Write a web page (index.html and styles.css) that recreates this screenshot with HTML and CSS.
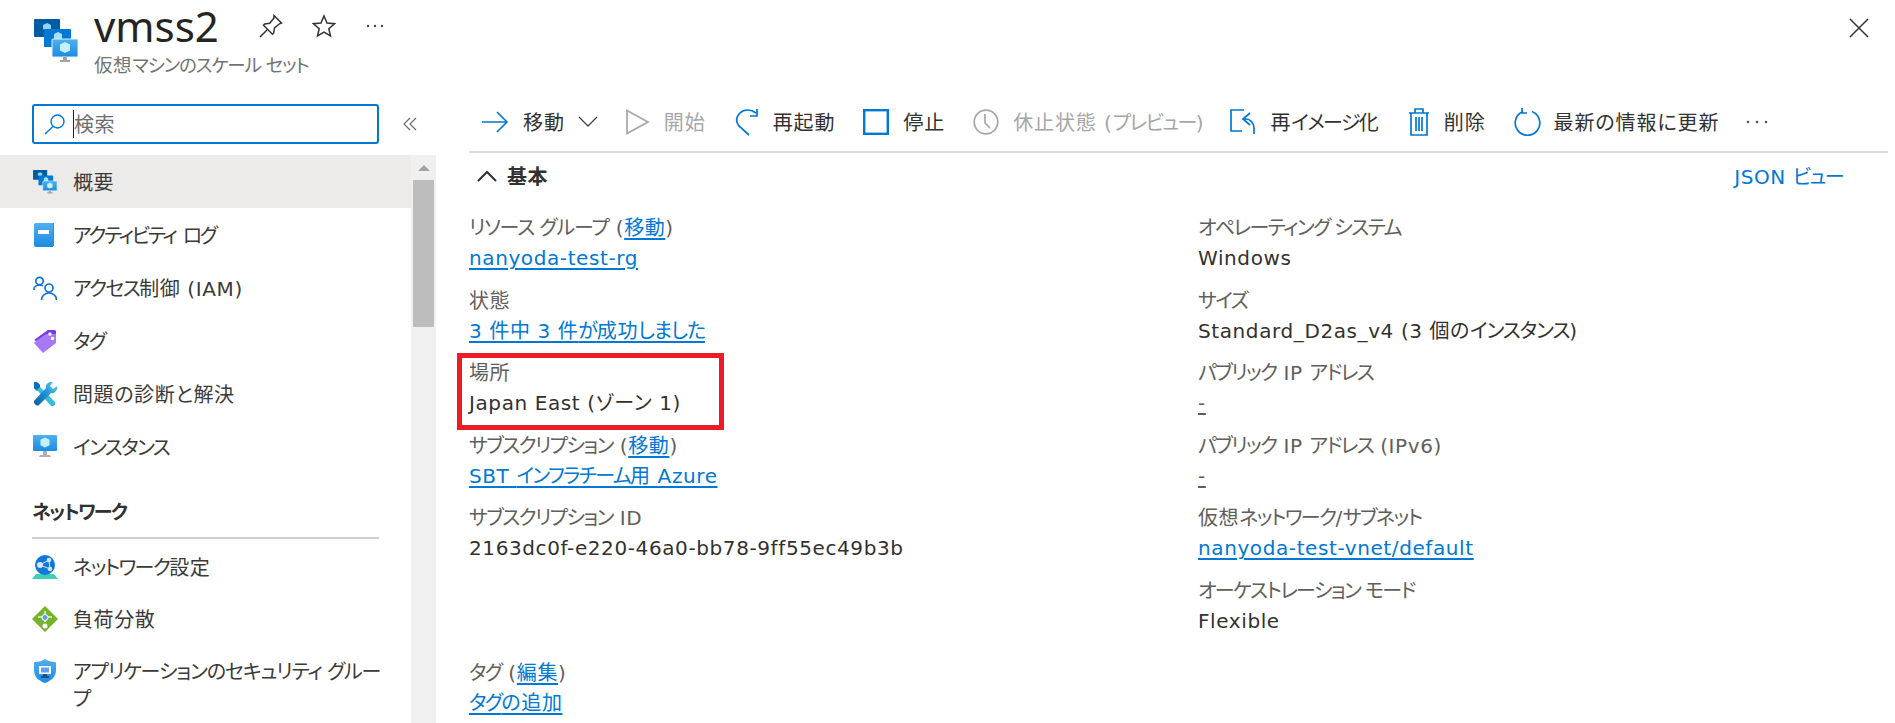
FILE: index.html
```html
<!DOCTYPE html>
<html lang="ja">
<head>
<meta charset="utf-8">
<title>vmss2</title>
<link rel="stylesheet" href="styles.css">
</head>
<body>
<svg class="defs" width="0" height="0">
  <defs>
    <linearGradient id="gFront" x1="0" y1="0" x2="0" y2="1"><stop offset="0" stop-color="#50b0f0"/><stop offset="1" stop-color="#1b8be0"/></linearGradient>
    <linearGradient id="gWrench" x1="1" y1="0" x2="0" y2="1"><stop offset="0" stop-color="#5fd0ee"/><stop offset=".5" stop-color="#1f8fd6"/><stop offset="1" stop-color="#0a5a9c"/></linearGradient>
    <symbol id="vmss" viewBox="0 0 44 44">
      <rect x="0" y="0" width="26" height="18" rx="1" fill="#005ba1"/>
      <path d="M13 4l4 2v4l-4 2-4-2V6z" fill="#8fd3f5"/>
      <rect x="10" y="10" width="27" height="18" rx="1" fill="#0078d4"/>
      <path d="M24 13l4 2v5l-4 2-4-2v-5z" fill="#a6e0fa"/>
      <rect x="18" y="20" width="26" height="18" rx="1" fill="url(#gFront)" stroke="#dff1fc"/>
      <path d="M31 23l5 2.500v6l-5 2.500-5-2.500v-6z" fill="#c3f1ff"/>
      <path d="M29 38h4v3h3v2h-10v-2h3z" fill="#a3a3a3"/>
    </symbol>
    <symbol id="monitor" viewBox="0 0 24 24">
      <rect x="0" y="0" width="24" height="16" rx="1" fill="url(#gFront)"/>
      <path d="M12 2.500l4.500 2.300v5.400L12 12.500l-4.500-2.300V4.800z" fill="#c3f1ff"/>
      <path d="M10 16h4v4h3l1 2H6l1-2h3z" fill="#b0b0b0"/>
    </symbol>
  </defs>
</svg>

<header class="top">
  <svg class="res-icon" width="44" height="44"><use href="#vmss"/></svg>
  <div class="titles">
    <div class="title-row">
      <h1 class="title">vmss2</h1>
      <div class="title-actions">
        <svg class="act" width="24" height="24" viewBox="0 0 24 24" fill="none" stroke="#333" stroke-width="1.500"><path d="M15 1.500l7.500 7.500-2 .8-5 4.200-.8 5-1.200 1.200-9-9 1.200-1.200 5-.8 4.200-5zM8 16L1 23"/></svg>
        <svg class="act" width="24" height="24" viewBox="0 0 24 24" fill="none" stroke="#333" stroke-width="1.500"><path d="M12 2l3 7 7.500.7-5.700 5 1.700 7.300-6.500-3.900L5.500 22l1.700-7.300-5.700-5L9 9z"/></svg>
        <svg class="act" width="20" height="24" viewBox="0 0 20 24" fill="#444"><circle cx="3" cy="12" r="1.200"/><circle cx="10" cy="12" r="1.200"/><circle cx="17" cy="12" r="1.200"/></svg>
      </div>
    </div>
    <div class="subtitle">仮想<span class="k2">マシンのスケール セット</span></div>
  </div>
  <svg class="close" width="20" height="20" viewBox="0 0 20 20" fill="none" stroke="#333" stroke-width="1.500"><path d="M1 1l18 18M19 1L1 19"/></svg>
</header>

<div class="body">
  <aside class="side">
    <div class="search-row">
      <div class="search">
        <svg width="22" height="22" viewBox="0 0 22 22" fill="none" stroke="#0078d4" stroke-width="1.400"><circle cx="13.500" cy="8.500" r="6.500"/><path d="M9 13.500L1 21"/></svg>
        <span class="caret"></span><span class="placeholder">検索</span>
      </div>
      <svg class="collapse" width="14" height="14" viewBox="0 0 14 14" fill="none" stroke="#666" stroke-width="1.100"><path d="M7 1L1 7l6 6M13 1L7 7l6 6"/></svg>
    </div>
    <div class="side-scroll">
      <nav class="nav">
        <a class="nav-item active"><svg width="24" height="24"><use href="#vmss"/></svg><span>概要</span></a>
        <a class="nav-item">
          <svg width="24" height="24" viewBox="0 0 24 24"><path d="M3 0h17v24H3a2 2 0 0 1-2-2V2a2 2 0 0 1 2-2z" fill="url(#gFront)"/><path d="M20 0h.8v23H20z" fill="#0f6cbd"/><rect x="5" y="7" width="11" height="4" fill="#fff"/></svg>
          <span class="k3">アクティビティ ログ</span></a>
        <a class="nav-item">
          <svg width="24" height="24" viewBox="0 0 24 24" fill="none" stroke="#0f6fe0" stroke-width="1.700"><circle cx="6.500" cy="5" r="3.700"/><path d="M.8 14c0-3 2.500-5 5.700-5 1.300 0 2.400.3 3.300.9"/><circle cx="16" cy="12" r="4"/><path d="M8.500 24c0-4 3.200-7 7.500-7s7.500 3 7.500 7"/></svg>
          <span><span class="k">アクセス</span>制御 (IAM)</span></a>
        <a class="nav-item">
          <svg width="24" height="24" viewBox="0 0 24 24"><path d="M15 1h6a2 2 0 0 1 2 2v11L10 24 1 14z" fill="#a67af4"/><path d="M15 1h6a2 2 0 0 1 2 2v2H13L3 12 1 11z" fill="#773adc"/><circle cx="17" cy="5" r="1.700" fill="#fff"/><circle cx="19.500" cy="9.500" r="1.700" fill="#fff"/></svg>
          <span class="k">タグ</span></a>
        <a class="nav-item">
          <svg width="24" height="24" viewBox="0 0 24 24"><path d="M1 0h3l3 3v2l15 15v3l-2 1h-2L5 9H3L1 6z" fill="#32bedd"/><path d="M1 0h3l3 3v2L4 8 1 6z" fill="#0a6cc0"/><path d="M24 4l-4 3-3-3 3-4c-4-1-8 2-7 6L1 19c-1 2 3 6 5 4L18 11c4 1 7-3 6-7z" fill="url(#gWrench)"/></svg>
          <span>問題の診断と解決</span></a>
        <a class="nav-item"><svg class="wide" width="26" height="24"><use href="#monitor"/></svg><span class="k">インスタンス</span></a>
        <h2 class="nav-head"><span class="k">ネットワーク</span></h2>
        <a class="nav-item">
          <svg class="wide" width="26" height="24" viewBox="0 0 26 24"><path d="M4 19h18l4 5H0z" fill="#3fcfb4"/><circle cx="13" cy="10" r="10" fill="#0f78d8"/><circle cx="8" cy="10" r="3" fill="#d9e8f5"/><circle cx="17" cy="5" r="2.300" fill="#cfe3f3"/><circle cx="18" cy="14" r="2.300" fill="#cfe3f3"/><path d="M8 10L17 5M8 10l10 4M17 5l1 9" stroke="#d9e8f5"/></svg>
          <span><span class="k">ネットワーク</span>設定</span></a>
        <a class="nav-item tightrow">
          <svg class="wide" width="26" height="26" viewBox="0 0 26 26"><path d="M13 0l13 13-13 13L0 13z" fill="#76b32c"/><path d="M13 5v11M6 11h14" stroke="#e8f5c8" stroke-width="1.500"/><circle cx="13" cy="11.500" r="3" fill="#5e9cf0" stroke="#fff"/><circle cx="13" cy="20" r="2.500" fill="#fff"/></svg>
          <span>負荷分散</span></a>
        <a class="nav-item multi">
          <svg width="24" height="24" viewBox="0 0 24 24"><path d="M12 0c3 2 6 3 10 3 1 0 1 1 1 2v6c0 7-5 11-11 13C6 22 1 18 1 11V5c0-1 0-2 1-2 4 0 7-1 10-3z" fill="url(#gFront)"/><rect x="6" y="7" width="12" height="8" fill="#fff"/><rect x="8" y="8.500" width="8" height="5" fill="#5ea0ef"/><path d="M10 15h4v2h2v2H8v-2h2z" fill="#1a4f8a"/></svg>
          <span class="k2">アプリケーションのセキュリティ グループ</span></a>
      </nav>
      <div class="scrollbar">
        <span class="sb-up"></span>
        <span class="sb-thumb"></span>
      </div>
    </div>
  </aside>

  <main class="main">
    <div class="toolbar">
      <button class="tool"><svg width="28" height="24" viewBox="0 0 28 24" fill="none" stroke="#0078d4" stroke-width="1.600"><path d="M1 12h25M16 2l10 10-10 10"/></svg><span>移動</span><svg class="chev" width="20" height="12" viewBox="0 0 20 12" fill="none" stroke="#444" stroke-width="1.300"><path d="M1 1l9 9 9-9"/></svg></button>
      <button class="tool off start"><svg width="24" height="26" viewBox="0 0 24 26" fill="none" stroke="#a6a6a6" stroke-width="1.700"><path d="M1 1.500l21 11.500L1 24.500z"/></svg><span>開始</span></button>
      <button class="tool"><svg width="24" height="28" viewBox="0 0 24 28" fill="none" stroke="#0078d4" stroke-width="1.700"><path d="M21 5C16 1 9 1 5 5c-4 4-4 9-1 13l10 9M22 1v7h-7"/></svg><span>再起動</span></button>
      <button class="tool"><svg width="26" height="26" viewBox="0 0 26 26" fill="none" stroke="#0078d4" stroke-width="2.400"><rect x="1.200" y="1.200" width="23.600" height="23.600"/></svg><span>停止</span></button>
      <button class="tool off hibernate"><svg width="26" height="26" viewBox="0 0 26 26" fill="none" stroke="#a6a6a6" stroke-width="1.700"><circle cx="13" cy="13" r="11.800"/><path d="M12 5v9l5 5"/></svg><span>休止状態 (<span class="k">プレビュー</span>)</span></button>
      <button class="tool"><svg width="27" height="26" viewBox="0 0 27 26" fill="none" stroke="#0078d4" stroke-width="1.700"><path d="M15 1H2v21h11"/><path d="M14 10h3c4 0 8 4 8 9v6M21 4l-7 6 7 6"/></svg><span>再<span class="k">イメージ</span>化</span></button>
      <button class="tool"><svg width="22" height="28" viewBox="0 0 22 28" fill="none" stroke="#0078d4" stroke-width="1.700"><path d="M1 5h20M7 5V1h8v4M3 5v22h16V5M8 9v14M11 9v14M14 9v14"/></svg><span>削除</span></button>
      <button class="tool refresh"><svg width="28" height="28" viewBox="0 0 28 28" fill="none" stroke="#0078d4" stroke-width="1.700"><path d="M18 3.500a12.300 12.300 0 1 1-9 0M8 0v5h5"/></svg><span>最新の情報に更新</span></button>
      <svg class="more" width="24" height="6" viewBox="0 0 24 6" fill="#555"><circle cx="3" cy="3" r="1.300"/><circle cx="12" cy="3" r="1.300"/><circle cx="21" cy="3" r="1.300"/></svg>
    </div>

    <div class="section-head">
      <svg width="20" height="12" viewBox="0 0 20 12" fill="none" stroke="#333" stroke-width="2"><path d="M1 11l9-9 9 9"/></svg>
      <h2 class="section-title">基本</h2>
      <a class="json">JSON <span class="k">ビュー</span></a>
    </div>

    <div class="grid">
      <div class="field"><div class="label"><span class="k2">リソース グループ</span> (<a class="link">移動</a>)</div><div class="value"><a class="link">nanyoda-test-rg</a></div></div>
      <div class="field"><div class="label"><span class="k">オペレーティング システム</span></div><div class="value">Windows</div></div>
      <div class="field"><div class="label">状態</div><div class="value"><a class="link">3 件中 3 件<span class="k2">が</span>成功<span class="k2">しました</span></a></div></div>
      <div class="field"><div class="label"><span class="k">サイズ</span></div><div class="value">Standard_D2as_v4 (3 個の<span class="k2">インスタンス</span>)</div></div>
      <div class="field"><div class="label">場所</div><div class="value">Japan East (ゾーン 1)</div><span class="redbox"></span></div>
      <div class="field"><div class="label"><span class="k">パブリック</span> IP <span class="k">アドレス</span></div><div class="value"><a class="link muted">-</a></div></div>
      <div class="field"><div class="label"><span class="k">サブスクリプション</span> (<a class="link">移動</a>)</div><div class="value"><a class="link">SBT <span class="k">インフラチーム</span>用 Azure</a></div></div>
      <div class="field"><div class="label"><span class="k">パブリック</span> IP <span class="k">アドレス</span> (IPv6)</div><div class="value"><a class="link muted">-</a></div></div>
      <div class="field"><div class="label"><span class="k">サブスクリプション</span> ID</div><div class="value">2163dc0f-e220-46a0-bb78-9ff55ec49b3b</div></div>
      <div class="field"><div class="label">仮想<span class="k">ネットワーク</span>/<span class="k">サブネット</span></div><div class="value"><a class="link">nanyoda-test-vnet/default</a></div></div>
      <div class="field"></div>
      <div class="field"><div class="label"><span class="k">オーケストレーション モード</span></div><div class="value">Flexible</div></div>
    </div>
    <div class="field tags"><div class="label"><span class="k">タグ</span> (<a class="link">編集</a>)</div><div class="value"><a class="link"><span class="k">タグ</span>の追加</a></div></div>
  </main>
</div>
</body>
</html>
```
FILE: styles.css
```css
* { box-sizing: border-box; }
html, body { margin: 0; height: 723px; overflow: hidden; background: #fff; }
body {
  font-family: "DejaVu Sans", "Noto Sans CJK JP", sans-serif;
  font-size: 20px;
  letter-spacing: .6px;
  color: #323130;
  font-feature-settings: "palt";
}
.k { letter-spacing: -1.600px; }
.k2 { letter-spacing: -1.100px; }
.k3 { letter-spacing: -2.300px; word-spacing: 3px; }
.defs { position: absolute; }
h1, h2 { margin: 0; }
svg { flex: none; display: block; }

.top { display: flex; height: 90px; padding: 19px 26px 0 34px; }
.res-icon { margin-right: 16px; }
.titles { flex: 1; margin-top: -19px; }
.title-row { display: flex; align-items: center; height: 52px; }
.title { font-family: "Noto Sans", sans-serif; font-size: 42px; letter-spacing: 0; font-weight: 400; line-height: 52px; color: #252423; width: 165px; }
.title-actions { display: flex; align-items: center; gap: 29px; }
.subtitle { font-size: 18.500px; line-height: 26px; color: #737373; margin-top: 1px; }
.close { margin-top: -1px; }

.body { display: flex; height: 633px; }
.side { width: 436px; flex: none; display: flex; flex-direction: column; padding-top: 14px; }
.search-row { display: flex; align-items: center; padding-left: 32px; height: 40px; margin-bottom: 11px; }
.search { width: 347px; height: 40px; border: 2px solid #0078d4; border-radius: 3px; display: flex; align-items: center; padding-left: 10px; }
.caret { width: 1px; height: 28px; background: #222; margin-left: 7px; }
.placeholder { color: #6e6e6e; padding-bottom: 2px; }
.collapse { margin-left: 24px; }
.side-scroll { flex: 1; display: flex; min-height: 0; }
.nav { width: 411px; }
.nav-item { display: flex; align-items: center; height: 53px; padding-left: 33px; gap: 16px; color: #3b3a39; }
.nav-item .wide { margin: 0 -1px; }
.nav-item.active { background: #edebe9; }
.nav-item.tightrow { height: 51px; }
.nav-item.multi { align-items: flex-start; height: 70px; padding-top: 15px; line-height: 27px; padding-right: 24px; }
.nav-item.multi svg { margin-top: 0; }
.nav-head { font-size: 19px; font-weight: 600; line-height: 26px; margin: 26px 32px 1px; padding-bottom: 12px; border-bottom: 2px solid #d2d0ce; color: #323130; }
.scrollbar { width: 25px; background: #f0f0f0; display: flex; flex-direction: column; align-items: center; }
.sb-up { margin-top: 10px; width: 0; height: 0; border-left: 6px solid transparent; border-right: 6px solid transparent; border-bottom: 6px solid #a3a3a3; }
.sb-thumb { margin-top: 9px; width: 21px; height: 147px; background: #bdbdbd; }

.main { flex: 1; margin: 0 7px 0 33px; min-width: 0; }
.toolbar { display: flex; align-items: center; height: 63px; border-bottom: 2px solid #dddbd9; padding: 2px 0 0 12px; gap: 28px; }
.tool { display: flex; align-items: center; gap: 14px; border: 0; background: none; padding: 0; font: inherit; letter-spacing: .9px; color: #323130; }
.tool.off { color: #a6a6a6; }
.tool.start { margin-right: 1px; }
.tool.hibernate { margin-right: -3px; }
.tool.refresh { gap: 12px; }
.more { margin-left: -2px; }
.chev { margin-left: -1px; }
.section-head { display: flex; align-items: center; height: 45px; padding-left: 8px; }
.section-title { font-size: 20px; font-weight: 600; margin-left: 10px; flex: 1; }
.json { color: #0078d4; margin-right: 45px; }
.grid { display: grid; grid-template-columns: 729px 1fr; row-gap: 12.500px; margin-top: 15px; }
.field { height: 60px; position: relative; }
.label { line-height: 30px; color: #605e5c; }
.value { line-height: 30px; color: #323130; }
.link { color: #0078d4; text-decoration: underline; text-underline-offset: 3px; }
.link.muted { color: #605e5c; }
.tags { margin-top: 22px; }
.redbox { position: absolute; left: -12px; top: -5px; width: 267px; height: 77px; border: 5px solid #ed1c24; }
```
